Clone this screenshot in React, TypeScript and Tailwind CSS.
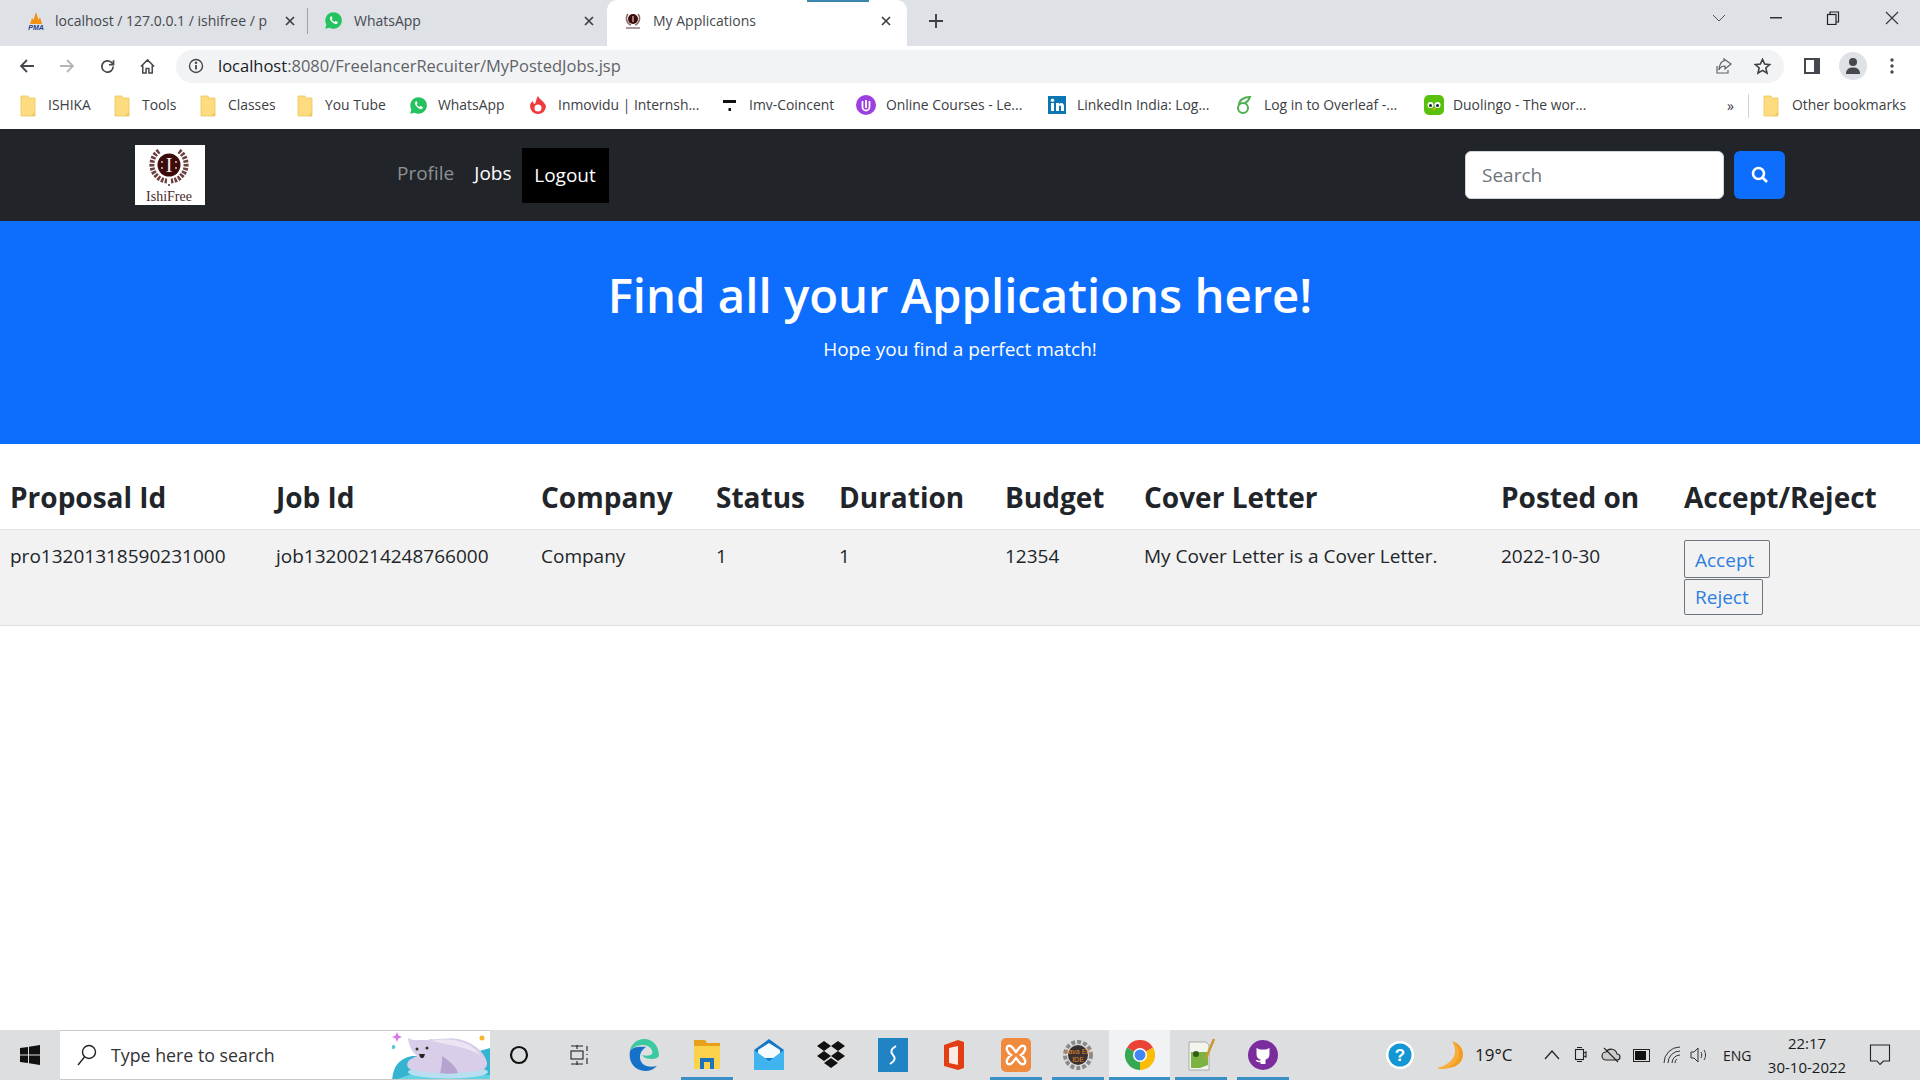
import React from "react";

const Folder = () => (
  <svg width="16" height="22" viewBox="0 0 16 22" className="shrink-0">
    <path d="M1 1h7l1 2h6v18H1z" fill="#fcdc7e" stroke="#eec55f" strokeWidth="0.8" />
    <path d="M11 21l4-4v4z" fill="#eec55f" />
  </svg>
);
const Wa = ({ s = 18 }: { s?: number }) => (
  <svg width={s} height={s} viewBox="0 0 24 24" className="shrink-0">
    <path d="M12 1.500a10.400 10.400 0 0 0-9 15.600L1.500 22.500l5.600-1.500A10.400 10.400 0 1 0 12 1.500z" fill="#25c35f" />
    <path d="M8.600 6.800c-.9.700-1.500 2-1 3.400 1.100 3 3.600 5.400 6.500 6.300 1.500.4 2.800-.4 3.200-1.400.2-.8.100-1.100-.2-1.300l-2-1c-.4-.1-.7 0-.9.300l-.7.900c-1.600-.6-3-1.900-3.700-3.500l.7-.8c.2-.3.200-.6.100-.9l-.8-1.900c-.2-.5-.8-.5-1.200-.1z" fill="#fff" />
  </svg>
);
const Logo = () => (
  <svg viewBox="0 0 70 60" className="w-[70px] h-[60px] shrink-0">
    <rect width="70" height="60" fill="#fff" />
    <g stroke="#6b4040" strokeWidth="5" strokeDasharray="2.500 1.300" fill="none">
      <path d="M24 6a16.500 16.500 0 0 0 8 30" />
      <path d="M44 6a16.500 16.500 0 0 1-8 30" />
    </g>
    <circle cx="34" cy="40" r="1" fill="#4a2a2a" />
    <circle cx="34" cy="20" r="11.500" fill="#3e0b0b" />
    <text x="34" y="27" textAnchor="middle" fill="#f5f0f0" fontSize="20" fontFamily="Liberation Serif">I</text>
    <circle cx="27" cy="17" r="0.900" fill="#ddd" /><circle cx="27" cy="23" r="0.900" fill="#ddd" />
    <circle cx="41" cy="17" r="0.900" fill="#ddd" /><circle cx="41" cy="23" r="0.900" fill="#ddd" />
    <text x="34" y="56" textAnchor="middle" fill="#4a2a2a" fontSize="14" fontFamily="Liberation Serif">IshiFree</text>
  </svg>
);
const Close = () => (
  <svg width="12" height="12" viewBox="0 0 12 12" stroke="#3c4043" strokeWidth="1.700"><path d="M2 2l8 8M10 2l-8 8" /></svg>
);

function Tabs() {
  return (
    <div className="flex items-center h-[46px] bg-[#dee1e6] shrink-0 text-[14px] text-[#45484d]">
      <div className="flex items-center w-[308px] pl-[26px] pr-[11px] border-r border-[#9aa0a6] h-[26px] mb-[5px]">
        <svg width="20" height="20" viewBox="0 0 20 20" className="shrink-0 mr-[9px]">
          <path d="M10 1l2.500 8 1.500-3 2 7H4l2-6 1.500 2z" fill="#f29111" />
          <text x="10" y="19" textAnchor="middle" fontSize="7" fontWeight="700" fontStyle="italic" fill="#24408f" fontFamily="Liberation Sans">PMA</text>
        </svg>
        <span className="w-[218px] overflow-hidden whitespace-nowrap">localhost / 127.0.0.1 / ishifree / p</span>
        <span className="ml-auto"><Close /></span>
      </div>
      <div className="flex items-center w-[299px] pl-[16px] pr-[12px] mb-[5px]">
        <Wa s={19} />
        <span className="ml-[11px]">WhatsApp</span>
        <span className="ml-auto"><Close /></span>
      </div>
      <div className="relative flex items-center w-[300px] h-[46px] pl-[17px] pr-[15px] pb-[5px] bg-white rounded-t-[10px]">
        <span className="absolute top-0 left-[200px] w-[62px] h-[2px] bg-[#3b87b0]" />
        <svg width="18" height="20" viewBox="0 0 18 20" className="shrink-0">
          <path d="M4 3a7 7 0 0 0 3 11M14 3a7 7 0 0 1-3 11" stroke="#8a7070" strokeWidth="1.500" fill="none" />
          <circle cx="9" cy="8" r="5" fill="#3e0b0b" />
          <rect x="8.500" y="5" width="1" height="6" fill="#eee" />
          <rect x="2" y="16" width="14" height="2" fill="#a89a9a" />
        </svg>
        <span className="ml-[11px]">My Applications</span>
        <span className="ml-auto"><Close /></span>
      </div>
      <svg width="16" height="16" viewBox="0 0 16 16" stroke="#3c4043" strokeWidth="1.900" className="ml-[21px] mb-[5px]"><path d="M8 1v14M1 8h14" /></svg>
      <div className="flex-1" />
      <div className="flex items-center mb-[10px]">
        <svg width="14" height="8" viewBox="0 0 14 8" stroke="#555" fill="none" className="mr-[44px]"><path d="M1 1l6 6 6-6" /></svg>
        <svg width="12" height="2" viewBox="0 0 12 2" className="mr-[44px]"><rect width="12" height="1.500" fill="#333" /></svg>
        <svg width="14" height="14" viewBox="0 0 14 14" stroke="#222" strokeWidth="1.200" fill="none" className="mr-[45px]"><rect x="1.500" y="3.500" width="8.500" height="10" /><path d="M4 3.500V1h8.500v10H10" /></svg>
        <svg width="14" height="14" viewBox="0 0 14 14" stroke="#333" strokeWidth="1.100" className="mr-[21px]"><path d="M1 1l12 12M13 1L1 13" /></svg>
      </div>
    </div>
  );
}

function Toolbar() {
  return (
    <div className="flex items-center h-[41px] bg-white shrink-0 pl-[19px] pb-[1px]">
      <svg width="16" height="16" viewBox="0 0 16 16" stroke="#45484d" strokeWidth="1.800" fill="none" className="mr-[24px]"><path d="M15 8H2M8 2L2 8l6 6" /></svg>
      <svg width="16" height="16" viewBox="0 0 16 16" stroke="#b4b6ba" strokeWidth="1.800" fill="none" className="mr-[24px]"><path d="M1 8h13M8 2l6 6-6 6" /></svg>
      <svg width="17" height="17" viewBox="0 0 24 24" stroke="#45484d" strokeWidth="2.400" fill="none" className="mr-[23px]"><path d="M20 12a8 8 0 1 1-2.500-5.800L20 9" /><path d="M20.500 3v6.500H14" /></svg>
      <svg width="17" height="17" viewBox="0 0 18 18" stroke="#45484d" strokeWidth="1.600" fill="none" className="mr-[20px]"><path d="M2 9l7-7 7 7M4 8v8h3.500v-5h3v5H14V8" /></svg>
      <div className="flex items-center flex-1 h-[33px] bg-[#f1f3f4] rounded-full pl-[12px] pr-[12px]">
        <svg width="16" height="16" viewBox="0 0 16 16" fill="none" stroke="#45484d" strokeWidth="1.400" className="mr-[14px]"><circle cx="8" cy="8" r="6.500" /><path d="M8 7v4.500" strokeWidth="1.800" /><circle cx="8" cy="4.800" r="0.600" /></svg>
        <span className="text-[16.500px] text-[#202124]">localhost<span className="text-[#5f6368]">:8080/FreelancerRecuiter/MyPostedJobs.jsp</span></span>
        <div className="flex-1" />
        <svg width="18" height="18" viewBox="0 0 18 18" fill="none" stroke="#5f6368" strokeWidth="1.200" className="mr-[20px]"><path d="M2 9v7h11v-3" /><path d="M9 4v-2l7 5-6 5V9c-3 0-5 1-6 4 0-4 2-9 5-9z" /></svg>
        <svg width="19" height="19" viewBox="0 0 24 24" fill="none" stroke="#3c4043" strokeWidth="2"><path d="M12 3l2.700 6 6.300.6-4.800 4.300 1.500 6.500-5.700-3.500-5.700 3.500 1.500-6.500L3 9.600 9.300 9z" /></svg>
      </div>
      <svg width="18" height="18" viewBox="0 0 18 18" className="ml-[19px] mr-[18px]"><rect x="1" y="1" width="16" height="16" fill="#45484d" /><rect x="3" y="3" width="8" height="12" fill="#fff" /></svg>
      <div className="flex items-center justify-center w-[28px] h-[28px] rounded-full bg-[#dee1e6]">
        <svg width="16" height="18" viewBox="0 0 16 18" fill="#45484d"><circle cx="8" cy="5" r="4" /><path d="M1 17c0-5 3-6.500 7-6.500s7 1.500 7 6.500z" /></svg>
      </div>
      <svg width="4" height="16" viewBox="0 0 4 16" fill="#45484d" className="ml-[23px] mr-[26px]"><circle cx="2" cy="2" r="1.700" /><circle cx="2" cy="8" r="1.700" /><circle cx="2" cy="14" r="1.700" /></svg>
    </div>
  );
}

const marks: { w: string; gap: string; label: string; icon: React.ReactNode }[] = [
  { w: "w-[94px]", gap: "gap-[12px]", label: "ISHIKA", icon: <Folder /> },
  { w: "w-[86px]", gap: "gap-[12px]", label: "Tools", icon: <Folder /> },
  { w: "w-[97px]", gap: "gap-[12px]", label: "Classes", icon: <Folder /> },
  { w: "w-[112px]", gap: "gap-[12px]", label: "You Tube", icon: <Folder /> },
  { w: "w-[120px]", gap: "gap-[10px]", label: "WhatsApp", icon: <Wa s={19} /> },
  {
    w: "w-[191px]",
    gap: "gap-[10px]",
    label: "Inmovidu | Internsh...",
    icon: (
      <svg width="19" height="20" viewBox="0 0 19 20" className="shrink-0">
        <path d="M9 1c1 3 6 5 8 10a8 8 0 0 1-16 0c0-3 2-4 3-5 0 2 1 3 2 3 1-2 1-5 3-8z" fill="#f0383f" />
        <circle cx="9" cy="13" r="3.500" fill="#fff" />
      </svg>
    ),
  },
  {
    w: "w-[136px]",
    gap: "gap-[10px]",
    label: "Imv-Coincent",
    icon: (
      <svg width="19" height="19" viewBox="0 0 19 19" className="shrink-0"><rect x="3" y="4" width="13" height="3" fill="#111" /><rect x="8.500" y="12" width="2.500" height="3" fill="#111" /></svg>
    ),
  },
  {
    w: "w-[192px]",
    gap: "gap-[10px]",
    label: "Online Courses - Le...",
    icon: (
      <svg width="20" height="20" viewBox="0 0 20 20" className="shrink-0"><circle cx="10" cy="10" r="10" fill="#9b3fe0" /><path d="M6.500 6v6a3.500 3.500 0 0 0 7 0V6M10 5v8" stroke="#fff" strokeWidth="1.800" fill="none" /></svg>
    ),
  },
  {
    w: "w-[187px]",
    gap: "gap-[11px]",
    label: "LinkedIn India: Log...",
    icon: (
      <svg width="18" height="18" viewBox="0 0 18 18" className="shrink-0"><rect width="18" height="18" fill="#0a76b4" /><rect x="3" y="7" width="3" height="8" fill="#fff" /><circle cx="4.500" cy="4.300" r="1.700" fill="#fff" /><path d="M8 7h3v1.200c1.500-2 5-1.500 5 2V15h-3v-4c0-2-2-2-2 0v4H8z" fill="#fff" /></svg>
    ),
  },
  {
    w: "w-[189px]",
    gap: "gap-[11px]",
    label: "Log in to Overleaf -...",
    icon: (
      <svg width="18" height="20" viewBox="0 0 18 20" fill="none" stroke="#4caf50" strokeWidth="2" className="shrink-0"><circle cx="8" cy="13" r="5" /><path d="M4 10c0-5 5-8 11-8-1 3-3 5-5 6" /></svg>
    ),
  },
  {
    w: "w-[303px]",
    gap: "gap-[9px]",
    label: "Duolingo - The wor...",
    icon: (
      <svg width="20" height="20" viewBox="0 0 20 20" className="shrink-0"><rect width="20" height="20" rx="5" fill="#58c10b" /><circle cx="6.500" cy="10" r="3" fill="#fff" /><circle cx="13.500" cy="10" r="3" fill="#fff" /><circle cx="6.500" cy="10.500" r="1.500" fill="#123" /><circle cx="13.500" cy="10.500" r="1.500" fill="#123" /><path d="M8.500 13h3l-1.500 3z" fill="#f5a800" /></svg>
    ),
  },
];

function Bookmarks() {
  return (
    <div className="flex items-center h-[42px] bg-white shrink-0 pl-[20px] pb-[5px] text-[13.900px] text-[#3c4043] whitespace-nowrap">
      {marks.map((m) => (
        <div key={m.label} className={`${m.w} ${m.gap} flex items-center`}>
          {m.icon}
          <span>{m.label}</span>
        </div>
      ))}
      <span className="text-[14px] w-[21px]">»</span>
      <div className="h-[24px] border-l border-[#d0d3d7] mr-[14px]" />
      <Folder />
      <span className="ml-[13px]">Other bookmarks</span>
    </div>
  );
}

function Navbar() {
  return (
    <div className="flex items-center h-[92px] bg-[#212529] shrink-0 pl-[135px]">
      <Logo />
      <div className="w-[192px]" />
      <span className="text-[19px] text-[#8d9094] mb-[4px]">Profile</span>
      <span className="text-[19px] text-white ml-[20px] mb-[4px]">Jobs</span>
      <div className="flex items-center justify-center w-[87px] h-[55px] bg-black text-white text-[19px] ml-[10px]">Logout</div>
      <div className="flex-1" />
      <div className="flex items-center w-[259px] h-[48px] bg-white rounded-[6px] border border-[#ced4da] pl-[16px] text-[19px] text-[#6c757d]">Search</div>
      <div className="flex items-center justify-center w-[51px] h-[48px] bg-[#0d6efd] rounded-[6px] ml-[10px] mr-[135px]">
        <svg width="18" height="18" viewBox="0 0 18 18" fill="none" stroke="#fff" strokeWidth="2.600"><circle cx="7.500" cy="7.500" r="5.500" /><path d="M11.500 11.500L16 16" /></svg>
      </div>
    </div>
  );
}

function Hero() {
  return (
    <div className="flex flex-col items-center h-[223px] bg-[#0d6efd] text-white shrink-0 pt-[41px]">
      <div className="text-[47.300px] font-semibold leading-[66px]">Find all your Applications here!</div>
      <div className="text-[19px] leading-[28px] mt-[7px]">Hope you find a perfect match!</div>
    </div>
  );
}

const cols = ["w-[266px]", "w-[265px]", "w-[175px]", "w-[123px]", "w-[166px]", "w-[139px]", "w-[357px]", "w-[183px]", "w-[246px]"];
const heads = ["Proposal Id", "Job Id", "Company", "Status", "Duration", "Budget", "Cover Letter", "Posted on", "Accept/Reject"];
const vals = ["pro13201318590231000", "job13200214248766000", "Company", "1", "1 ", "12354", "My Cover Letter is a Cover Letter.", "2022-10-30"];

function DataTable() {
  return (
    <table className="table-fixed border-collapse w-[1920px] text-[#212529]">
      <thead>
        <tr className="h-[85px] border-b border-[#dee2e6]">
          {heads.map((h, i) => (
            <th key={h} className={`${cols[i]} pl-[10px] text-left text-[28px] font-bold align-middle pt-[22px] whitespace-nowrap`}>{h}</th>
          ))}
        </tr>
      </thead>
      <tbody>
        <tr className="bg-[#f2f2f2] border-b border-[#dee2e6]">
          {vals.map((v) => (
            <td key={v} className="pl-[10px] text-[19px] align-top pt-[11px] leading-[30px]">{v}</td>
          ))}
          <td className="pl-[10px] pt-[10px] pb-[10px] align-top">
            <div className="flex flex-col items-start gap-[1px]">
              <span className="flex items-center w-[86px] h-[38px] pl-[10px] pt-[3px] border border-[#6c757d] rounded-[2px] text-[19px] text-[#2d7ee0]">Accept</span>
              <span className="flex items-center w-[79px] h-[36px] pl-[10px] pt-[2px] border border-[#6c757d] rounded-[2px] text-[19px] text-[#2d7ee0]">Reject</span>
            </div>
          </td>
        </tr>
      </tbody>
    </table>
  );
}

const Slot = ({ w, bar, active, children }: { w: string; bar?: boolean; active?: boolean; children: React.ReactNode }) => (
  <div className={`${w} relative flex items-center justify-center h-[50px] ${active ? "bg-[#f1f2f3]" : ""}`}>
    {children}
    {bar && <span className={`absolute bottom-0 h-[3px] bg-[#3a8fc4] ${active ? "left-0 right-0" : "left-[5px] right-[5px]"}`} />}
  </div>
);

function Taskbar() {
  return (
    <div className="flex items-center h-[50px] bg-[#dcdee0] shrink-0 overflow-hidden text-[#1a1a1a]">
      <div className="flex items-center justify-center w-[60px]">
        <svg width="20" height="20" viewBox="0 0 20 20" fill="#111"><path d="M0 3l8-1v7.500H0zM9 1.800L20 0v9.500H9zM0 10.500h8V18l-8-1zM9 10.500h11V20L9 18.200z" /></svg>
      </div>
      <div className="relative flex items-center w-[430px] h-[50px] bg-white border-t border-b border-[#c8cacc] pl-[17px] overflow-hidden">
        <svg width="20" height="22" viewBox="0 0 20 22" fill="none" stroke="#222" strokeWidth="1.400"><circle cx="12" cy="8" r="6.500" /><path d="M7.500 13L1 21" /></svg>
        <span className="ml-[14px] text-[17.800px] text-[#333]">Type here to search</span>
        <svg width="98" height="50" viewBox="0 0 98 50" className="absolute right-0 top-0">
          <path d="M0 50C1 36 6 28 20 25H70L98 17v33z" fill="#35b4d2" />
          <path d="M0 50h98V44c-20-1-50 0-76-2z" fill="#62d3e4" />
          <ellipse cx="56" cy="41" rx="40" ry="6.500" fill="#b9def0" />
          <path d="M16 7l5 2h14l4-1c8 1 18-2 27 0 11 2 20 8 25 15 4 6 5 10 3 13-2 4-11 5-18 5-20 2-38 2-56-2-4-1-6-5-4-8 1-3 6-4 9-6-3-3-8-7-9-18z" fill="#d9cee9" />
          <path d="M40 10c8-2 18-2 26 0 10 2 18 8 22 14-12-8-32-10-48-14z" fill="#ece6f4" />
          <path d="M50 25c6 4 14 10 16 17-6 1-12 1-18 0 2-6 2-12 2-17z" fill="#b5a3d0" />
          <circle cx="25" cy="18" r="1.500" fill="#332" /><circle cx="35" cy="17" r="1.500" fill="#332" />
          <path d="M27 23h6l-1 3c-1 1.500-3 1.500-4 0z" fill="#222" />
          <path d="M5 1l1.500 3.500L10 6 6.500 7.500 5 11 3.500 7.500 0 6l3.500-1.500z" fill="#d87be6" />
          <circle cx="1.500" cy="16" r="2" fill="#5cc6da" />
          <circle cx="90" cy="7" r="2.500" fill="#f5b82e" />
        </svg>
      </div>
      <Slot w="w-[58px]">
        <svg width="20" height="20" viewBox="0 0 20 20" fill="none" stroke="#111" strokeWidth="2.200"><circle cx="10" cy="10" r="8" /></svg>
      </Slot>
      <Slot w="w-[62px]">
        <svg width="20" height="22" viewBox="0 0 20 22" fill="none" stroke="#222" strokeWidth="1.100"><rect x="2" y="7" width="12" height="8" /><path d="M2 2h12M2 20h12M8 1v4M8 17v4M18 2v5M18 10v1M18 14v6" /></svg>
      </Slot>
      <div className="w-[4px]" />
      <Slot w="w-[62px]">
        <svg width="32" height="34" viewBox="0 0 32 34">
          <path d="M30 18C30 8 24 1 15 1 8 1 2 6 1 13c3-4 8-6 13-6 6 0 11 5 9 9-2 2-6 2-10 1 2 3 6 4 10 4 3 0 6-1 7-3z" fill="#3ac9a0" />
          <path d="M1 13c-2 10 4 20 15 20 5 0 9-2 12-5-8 2-16 0-17-8-.5-5 3-9 6-11-7-1-14 0-16 4z" fill="#1672c8" />
        </svg>
      </Slot>
      <Slot w="w-[62px]" bar>
        <svg width="30" height="32" viewBox="0 0 30 32">
          <path d="M2 1h11l2 3h13v3H2z" fill="#e6a118" />
          <rect x="2" y="7" width="26" height="23" fill="#fcd24c" />
          <path d="M8 30v-11h14v11h-4v-7h-6v7z" fill="#1d73b8" />
        </svg>
      </Slot>
      <Slot w="w-[62px]">
        <svg width="30" height="34" viewBox="0 0 30 34">
          <path d="M0 12L15 1l15 11v20H0z" fill="#1278c4" />
          <path d="M4 12L15 5l11 7v8H4z" fill="#f4fafe" />
          <path d="M0 12l15 11 15-11v20H0z" fill="#3fb4ee" />
        </svg>
      </Slot>
      <Slot w="w-[62px]">
        <svg width="30" height="30" viewBox="0 0 30 30" fill="#111"><path d="M8 1l7 5-7 5-7-5zM22 1l7 5-7 5-7-5zM8 11l7 5-7 5-7-5zM22 11l7 5-7 5-7-5zM15 18l7 5-7 5-7-5z" /></svg>
      </Slot>
      <Slot w="w-[61px]">
        <svg width="30" height="34" viewBox="0 0 30 34"><rect width="30" height="34" fill="#1f83c4" /><path d="M18 8c-5 3-6 6-3 9s2 6-3 9" stroke="#fff" strokeWidth="2" fill="none" /></svg>
      </Slot>
      <Slot w="w-[62px]">
        <svg width="24" height="32" viewBox="0 0 24 32"><path d="M2 6l14-5 6 2v26l-6 2-14-4z" fill="#e23d13" /><path d="M7 9l9-2v19l-9-2z" fill="#fbe9e2" /></svg>
      </Slot>
      <Slot w="w-[62px]" bar>
        <svg width="30" height="34" viewBox="0 0 30 34"><rect width="30" height="34" rx="5" fill="#f08a3c" /><path d="M7 8c4-2 6 4 8 6 2-2 4-8 8-6 3 2 0 7-3 9 3 2 6 7 3 9-4 2-6-4-8-6-2 2-4 8-8 6-3-2 0-7 3-9-3-2-6-7-3-9z" fill="none" stroke="#fff" strokeWidth="2.400" /></svg>
      </Slot>
      <Slot w="w-[62px]" bar>
        <svg width="30" height="30" viewBox="0 0 30 30"><circle cx="15" cy="15" r="13" fill="none" stroke="#8a8a8a" strokeWidth="4" strokeDasharray="4 2" /><circle cx="15" cy="15" r="10" fill="#3a3030" /><text x="15" y="14" textAnchor="middle" fontSize="7" fill="#e08a2e" fontFamily="Liberation Sans">Java EE</text><text x="15" y="22" textAnchor="middle" fontSize="7" fill="#e08a2e" fontFamily="Liberation Sans">IDE</text></svg>
      </Slot>
      <Slot w="w-[61px]" bar active>
        <svg width="30" height="30" viewBox="0 0 30 30">
          <path d="M15 15L2 7.500A15 15 0 0 1 28 7.500z" fill="#ea4335" />
          <path d="M15 15L28 7.500A15 15 0 0 1 15 30z" fill="#fbbc04" />
          <path d="M15 15L15 30A15 15 0 0 1 2 7.500z" fill="#34a853" />
          <circle cx="15" cy="15" r="7" fill="#fff" /><circle cx="15" cy="15" r="5.500" fill="#4285f4" />
        </svg>
      </Slot>
      <Slot w="w-[62px]" bar>
        <svg width="30" height="34" viewBox="0 0 30 34"><path d="M3 4h17l3 3v25H3z" fill="#f4f4ee" stroke="#aaa" /><path d="M5 14h17v13l-8 3H5z" fill="#7cb342" /><circle cx="10" cy="16" r="3" fill="#2f5d1a" /><path d="M20 20L28 1" stroke="#c99a2e" strokeWidth="2.500" /></svg>
      </Slot>
      <Slot w="w-[62px]" bar>
        <svg width="30" height="30" viewBox="0 0 30 30"><circle cx="15" cy="15" r="15" fill="#7b2d9e" /><path d="M8.500 8l3.500 1.500h6L21.500 8v6c0 3.500-2 5-4 5.500V24h-5v-2c-3 1-4-1-5-2 2 0 3 1 5 .5v-1c-2-.5-4-2-4-5.500z" fill="#fff" /></svg>
      </Slot>
      <div className="w-[92px]" />
      <svg width="28" height="28" viewBox="0 0 28 28"><circle cx="14" cy="14" r="14" fill="#fff" /><circle cx="14" cy="14" r="11.500" fill="#1496d4" /><text x="14" y="20" textAnchor="middle" fontSize="17" fontWeight="700" fill="#fff" fontFamily="Liberation Sans">?</text></svg>
      <div className="w-[20px]" />
      <svg width="30" height="30" viewBox="0 0 30 30"><path d="M18 1c6 8 5 28-15 27C8 29 27 30 29 16 30 8 24 3 18 1z" fill="#f39c21" /><path d="M18 1c6 8 5 22-15 27 9 3 17-2 21-9 3-7 0-14-6-18z" fill="#f6ad3a" /></svg>
      <span className="ml-[11px] text-[17px] w-[69px]">19°C</span>
      <svg width="16" height="10" viewBox="0 0 16 10" fill="none" stroke="#222" strokeWidth="1.200"><path d="M1 9l7-8 7 8" /></svg>
      <div className="w-[14px]" />
      <svg width="13" height="18" viewBox="0 0 13 18" fill="none" stroke="#222" strokeWidth="1.100"><rect x="1.500" y="3.500" width="8" height="10" /><path d="M3 1.500h5M3 15.500h5M10 7l2-1v5l-2-1" /></svg>
      <div className="w-[14px]" />
      <svg width="20" height="18" viewBox="0 0 20 18" fill="none" stroke="#222" strokeWidth="1.100"><path d="M5 14a4 4 0 0 1 0-8 6 6 0 0 1 11 2 3 3 0 0 1 0 6z" fill="#ccc" /><path d="M3 2l14 14" /></svg>
      <div className="w-[12px]" />
      <svg width="18" height="13" viewBox="0 0 18 13"><rect x="0.500" y="0.500" width="16" height="12" fill="none" stroke="#222" /><rect x="2" y="2" width="11" height="9" fill="#111" /></svg>
      <div className="w-[12px]" />
      <svg width="18" height="18" viewBox="0 0 18 18" fill="none" stroke="#333" strokeWidth="1"><path d="M1 17A16 16 0 0 1 17 1M5 17A12 12 0 0 1 17 5M9 17a8 8 0 0 1 8-8M12 17a5 5 0 0 1 2-4" /></svg>
      <div className="w-[9px]" />
      <svg width="18" height="18" viewBox="0 0 18 18" fill="none" stroke="#333" strokeWidth="1"><path d="M1 6v6h3l4 4V2L4 6zM11 6c1 2 1 4 0 6M14 4c2 3 2 7 0 10" /></svg>
      <span className="ml-[15px] text-[14px] w-[42px]">ENG</span>
      <div className="flex flex-col items-center w-[84px] text-[15px] leading-[24px] whitespace-nowrap">
        <span>22:17</span>
        <span>30-10-2022</span>
      </div>
      <div className="flex-1 flex justify-center pr-[10px]">
        <svg width="22" height="24" viewBox="0 0 22 24" fill="none" stroke="#222" strokeWidth="1.100"><path d="M1.500 2h19v16h-6l-3.500 3.500L8 18H1.500z" /></svg>
      </div>
    </div>
  );
}

export default function App() {
  return (
    <div className="flex flex-col w-[1920px] h-[1080px] overflow-hidden bg-white font-['Open_Sans','Noto_Sans',sans-serif]">
      <Tabs />
      <Toolbar />
      <Bookmarks />
      <Navbar />
      <Hero />
      <DataTable />
      <div className="flex-1" />
      <Taskbar />
    </div>
  );
}
